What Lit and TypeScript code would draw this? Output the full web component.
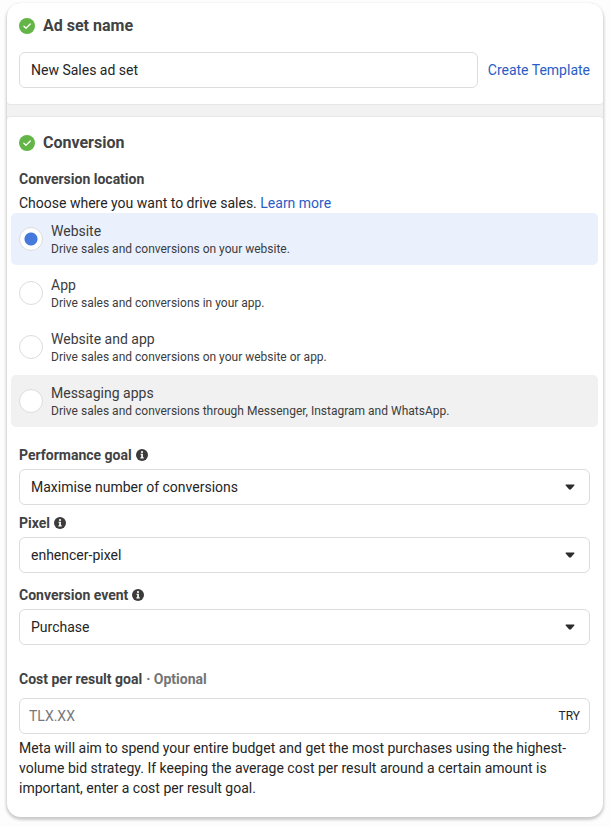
import { LitElement, html, css, svg } from "lit";
import { customElement, state } from "lit/decorators.js";
import { classMap } from "lit/directives/class-map.js";

interface Location {
  id: string;
  title: string;
  description: string;
}

interface Choice {
  id: string;
  label: string;
  options: string[];
  spacing: string;
}

const LOCATIONS: Location[] = [
  { id: "website", title: "Website", description: "Drive sales and conversions on your website." },
  { id: "app", title: "App", description: "Drive sales and conversions in your app." },
  { id: "website-app", title: "Website and app", description: "Drive sales and conversions on your website or app." },
  { id: "messaging", title: "Messaging apps", description: "Drive sales and conversions through Messenger, Instagram and WhatsApp." },
];

const CHOICES: Choice[] = [
  { id: "goal", label: "Performance goal", options: ["Maximise number of conversions"], spacing: "far" },
  { id: "pixel", label: "Pixel", options: ["enhencer-pixel"], spacing: "near" },
  { id: "event", label: "Conversion event", options: ["Purchase"], spacing: "mid" },
];

const checkIcon = html`<svg class="check" viewBox="0 0 16 16" aria-hidden="true">
  ${svg`<circle cx="8" cy="8" r="8" fill="#62b546"></circle>
  <path d="M4.9 8.3 7 10.2 11.3 6" fill="none" stroke="#fff" stroke-width="1.3" stroke-linecap="round" stroke-linejoin="round"></path>`}
</svg>`;

const infoIcon = html`<svg class="info" viewBox="0 0 12 12" aria-hidden="true">
  ${svg`<circle cx="6" cy="6" r="6" fill="#3b3b3b"></circle>
  <circle cx="6" cy="3" r="1.1" fill="#fff"></circle>
  <path d="M4.5 4.8H6.9V8.3H7.7V9.4H4.4V8.3H5.2V5.8H4.5Z" fill="#fff"></path>`}
</svg>`;

@customElement("app-root")
export class AppRoot extends LitElement {
  @state() private selected = "website";

  static styles = css`
    :host {
      display: block;
      box-sizing: border-box;
      min-height: 100vh;
      padding: 3px 7px 9px;
      background: #fdfdfd;
      font-family: Roboto, "Liberation Sans", sans-serif;
      font-size: 14px;
      line-height: 20px;
      color: #242526;
    }
    * {
      box-sizing: border-box;
    }
    .panel {
      display: flex;
      flex-direction: column;
      gap: 13px;
      border-radius: 14px;
      overflow: hidden;
      background: #f2f2f2;
      box-shadow: 0 2px 3px 1px rgba(0, 0, 0, 0.2);
    }
    .section {
      padding: 16px 13px 19px 12px;
      border-radius: 3px;
      background: #fff;
      box-shadow: 0 0 2px rgba(0, 0, 0, 0.16);
    }
    .section.name {
      padding-top: 13px;
      padding-bottom: 16px;
    }
    .heading {
      display: flex;
      align-items: center;
      gap: 8px;
      margin: 0 0 16px;
      font-size: 16px;
      font-weight: 700;
      line-height: 20px;
      color: #414243;
    }
    .check {
      width: 16px;
      height: 16px;
    }
    .name-row {
      display: flex;
      align-items: center;
      gap: 10px;
    }
    .box {
      width: 100%;
      height: 36px;
      padding: 0 12px;
      border: 1px solid #dcdcdc;
      border-radius: 6px;
      background: #fff;
      font: inherit;
      color: inherit;
      outline: none;
    }
    .name-row .box {
      flex: 1;
      min-width: 0;
      padding: 0 11px;
    }
    .link {
      color: #2a5cc6;
      text-decoration: none;
      white-space: nowrap;
    }
    .label {
      display: flex;
      align-items: center;
      gap: 4px;
      font-weight: 700;
      color: #414243;
    }
    .intro {
      margin: 4px 0 0;
    }
    .locations {
      display: grid;
      gap: 2px;
      margin: 0 -8px;
      padding: 0;
      border: 0;
    }
    .location {
      display: flex;
      align-items: center;
      gap: 8px;
      height: 52px;
      padding: 0 8px;
      border-radius: 5px;
      color: #3b3c3d;
    }
    .location.selected {
      background: #eaf1fd;
    }
    .location.hovered {
      background: #f1f1f1;
    }
    .radio {
      appearance: none;
      flex: none;
      width: 24px;
      height: 24px;
      margin: 0;
      border: 1px solid #dcdcdc;
      border-radius: 50%;
      background: #fff;
    }
    .radio:checked {
      background: radial-gradient(circle, #4679dc 6px, #fff 7px);
    }
    .words {
      display: flex;
      flex-direction: column;
    }
    .description {
      font-size: 12px;
      line-height: 16px;
    }
    .field {
      display: flex;
      flex-direction: column;
      gap: 4px;
    }
    .field.far {
      margin-top: 18px;
    }
    .field.near {
      margin-top: 8px;
    }
    .field.mid {
      margin-top: 12px;
    }
    .field.cost {
      margin-top: 24px;
    }
    .cost .label {
      margin-bottom: 5px;
    }
    .info {
      width: 12px;
      height: 12px;
    }
    .optional {
      color: #737475;
    }
    .control {
      position: relative;
    }
    .select {
      display: block;
      appearance: none;
      padding: 0 11px;
    }
    .arrow {
      position: absolute;
      top: 15px;
      right: 15px;
      width: 10px;
      height: 6px;
      pointer-events: none;
    }
    .amount {
      display: flex;
      align-items: center;
      padding: 0 9px;
    }
    .amount-input {
      flex: 1;
      min-width: 0;
      padding: 0;
      border: 0;
      outline: none;
      background: none;
      font: inherit;
      color: inherit;
    }
    .amount-input::placeholder {
      color: #77787a;
      opacity: 1;
    }
    .currency {
      font-size: 12px;
    }
    .help {
      margin: 0;
    }
  `;

  private renderLocation(item: Location) {
    const row = {
      location: true,
      selected: item.id === this.selected,
      hovered: item.id === "messaging" && item.id !== this.selected,
    };
    return html`<label class=${classMap(row)}>
      <input
        class="radio"
        type="radio"
        name="location"
        .checked=${item.id === this.selected}
        @change=${() => (this.selected = item.id)}
      />
      <span class="words">
        <span>${item.title}</span>
        <span class="description">${item.description}</span>
      </span>
    </label>`;
  }

  private renderChoice(item: Choice) {
    return html`<div class="field ${item.spacing}">
      <label class="label" for=${item.id}>${item.label} ${infoIcon}</label>
      <div class="control">
        <select class="box select" id=${item.id}>
          ${item.options.map((option) => html`<option>${option}</option>`)}
        </select>
        <svg class="arrow" viewBox="0 0 10 6" aria-hidden="true">
          <path d="M1 0.5H9Q9.8 0.7 9.3 1.5L6 5.2Q5 6.1 4 5.2L0.7 1.5Q0.2 0.7 1 0.5Z" fill="#2b2c2d"></path>
        </svg>
      </div>
    </div>`;
  }

  render() {
    return html`<main class="panel">
      <section class="section name">
        <h2 class="heading">${checkIcon}<label for="name">Ad set name</label></h2>
        <div class="name-row">
          <input class="box" id="name" type="text" value="New Sales ad set" />
          <a class="link" href="#template">Create Template</a>
        </div>
      </section>
      <section class="section">
        <h2 class="heading">${checkIcon}Conversion</h2>
        <div class="label" id="location-label">Conversion location</div>
        <p class="intro">
          Choose where you want to drive sales. <a class="link" href="#learn">Learn more</a>
        </p>
        <div class="locations" role="radiogroup" aria-labelledby="location-label">
          ${LOCATIONS.map((item) => this.renderLocation(item))}
        </div>
        ${CHOICES.map((item) => this.renderChoice(item))}
        <div class="field cost">
          <label class="label" for="cost">Cost per result goal <span class="optional">· Optional</span></label>
          <div class="box amount">
            <input class="amount-input" id="cost" type="text" placeholder="TLX.XX" />
            <span class="currency">TRY</span>
          </div>
          <p class="help">
            Meta will aim to spend your entire budget and get the most purchases using the
            highest-volume bid strategy. If keeping the average cost per result around a certain
            amount is important, enter a cost per result goal.
          </p>
        </div>
      </section>
    </main>`;
  }
}
